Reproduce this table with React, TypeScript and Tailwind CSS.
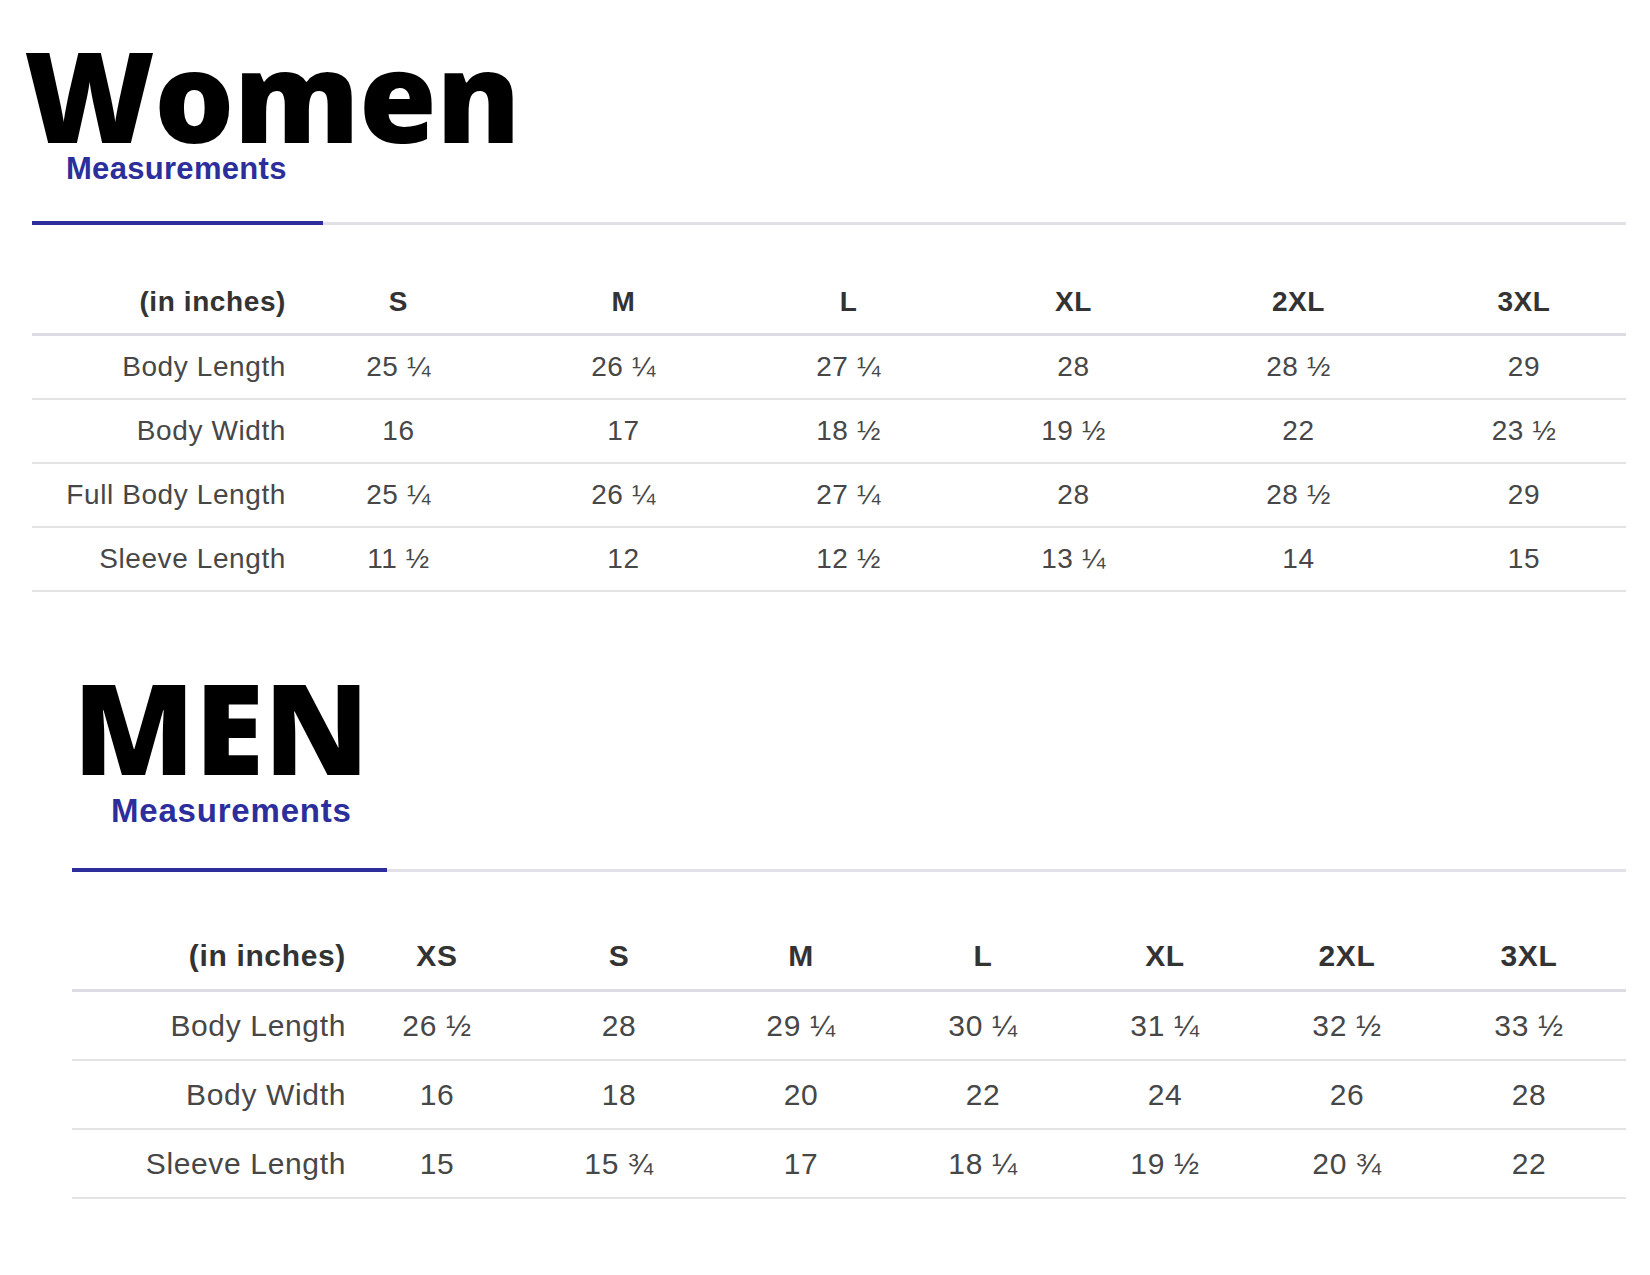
import React from "react";

const womenSizes = ["S", "M", "L", "XL", "2XL", "3XL"];
const womenRows: [string, string[]][] = [
  ["Body Length", ["25 ¼", "26 ¼", "27 ¼", "28", "28 ½", "29"]],
  ["Body Width", ["16", "17", "18 ½", "19 ½", "22", "23 ½"]],
  ["Full Body Length", ["25 ¼", "26 ¼", "27 ¼", "28", "28 ½", "29"]],
  ["Sleeve Length", ["11 ½", "12", "12 ½", "13 ¼", "14", "15"]],
];

const menSizes = ["XS", "S", "M", "L", "XL", "2XL", "3XL"];
const menRows: [string, string[]][] = [
  ["Body Length", ["26 ½", "28", "29 ¼", "30 ¼", "31 ¼", "32 ½", "33 ½"]],
  ["Body Width", ["16", "18", "20", "22", "24", "26", "28"]],
  ["Sleeve Length", ["15", "15 ¾", "17", "18 ¼", "19 ½", "20 ¾", "22"]],
];

const titleFont = { fontFamily: '"Open Sans", "Noto Sans", sans-serif' };
const arial = { fontFamily: '"Liberation Sans", Arial, sans-serif' };

export default function App() {
  return (
    <div className="w-[1650px] h-[1275px] bg-white overflow-hidden" style={arial}>
      {/* WOMEN */}
      <section className="pt-[35px]">
        <h1
          className="pl-[24px] text-[126px] leading-[118px] font-extrabold text-black tracking-[-0.7px]"
          style={titleFont}
        >
          Women
        </h1>
        <div className="pl-[66px] text-[31px] leading-[31px] font-bold text-[#2c2e9c] tracking-[0.3px]">
          Measurements
        </div>
        <div className="mt-[37px] ml-[32px] w-[1594px] flex items-end">
          <div className="w-[291px] h-[4px] bg-[#2c2e9c]" />
          <div className="flex-1 h-[3px] bg-[#e1e1e7]" />
        </div>

        <div className="mt-[46px] ml-[32px] w-[1594px] text-[28px] tracking-[0.6px]">
          <div className="grid grid-cols-[254px_repeat(5,225px)_215px] h-[65px] items-center border-b-[3px] border-[#dcdce2] font-bold text-[#333]">
            <div className="text-right">(in inches)</div>
            {womenSizes.map((s, i) => (
              <div key={s} className={i === 5 ? "text-center pl-[11px]" : "text-center"}>
                {s}
              </div>
            ))}
          </div>
          {womenRows.map(([label, vals]) => (
            <div
              key={label}
              className="grid grid-cols-[254px_repeat(5,225px)_215px] h-[64px] items-center border-b-[2px] border-[#e3e3e6] text-[#474747]"
            >
              <div className="text-right">{label}</div>
              {vals.map((v, i) => (
                <div key={i} className={i === 5 ? "text-center pl-[11px]" : "text-center"}>
                  {v}
                </div>
              ))}
            </div>
          ))}
        </div>
      </section>

      {/* MEN */}
      <section className="mt-[75px]">
        <h1
          className="pl-[73px] text-[126px] leading-[118px] font-extrabold text-black"
          style={titleFont}
        >
          MEN
        </h1>
        <div className="mt-[9px] pl-[111px] text-[33px] leading-[33px] font-bold text-[#2c2e9c] tracking-[0.8px]">
          Measurements
        </div>
        <div className="mt-[41px] ml-[72px] w-[1554px] flex items-end">
          <div className="w-[315px] h-[4px] bg-[#2c2e9c]" />
          <div className="flex-1 h-[3px] bg-[#e1e1e7]" />
        </div>

        <div className="mt-[49px] ml-[72px] w-[1554px] text-[30px] tracking-[0.65px]">
          <div className="grid grid-cols-[274px_repeat(7,182px)] h-[71px] items-center border-b-[3px] border-[#dcdce2] font-bold text-[#333]">
            <div className="text-right">(in inches)</div>
            {menSizes.map((s) => (
              <div key={s} className="text-center">
                {s}
              </div>
            ))}
          </div>
          {menRows.map(([label, vals]) => (
            <div
              key={label}
              className="grid grid-cols-[274px_repeat(7,182px)] h-[69px] items-center border-b-[2px] border-[#e3e3e6] text-[#474747]"
            >
              <div className="text-right">{label}</div>
              {vals.map((v, i) => (
                <div key={i} className="text-center">
                  {v}
                </div>
              ))}
            </div>
          ))}
        </div>
      </section>
    </div>
  );
}
